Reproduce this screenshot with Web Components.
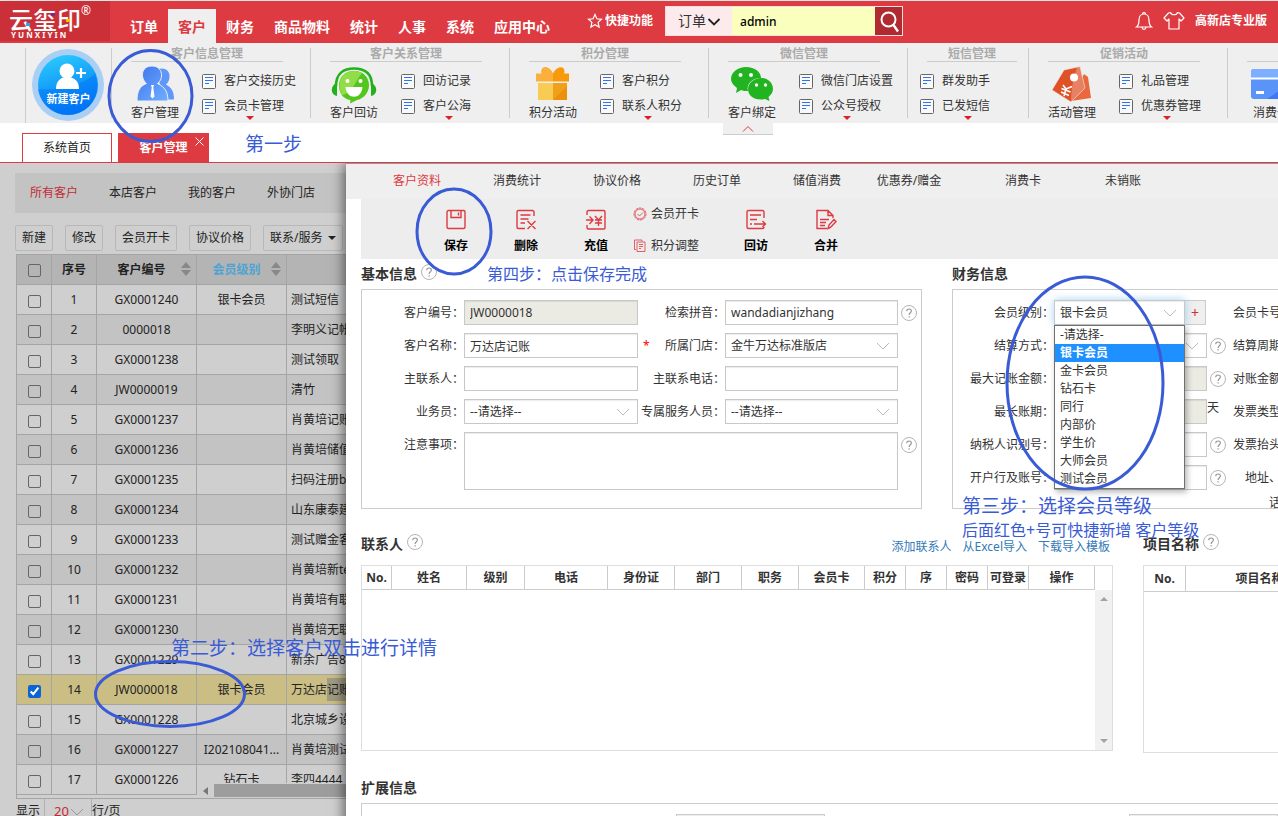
<!DOCTYPE html>
<html lang="zh-CN">
<head>
<meta charset="utf-8">
<title>云玺印 - 客户管理</title>
<style>
html,body{margin:0;height:100%}
body{font:12px/18px "Noto Sans","Noto Sans CJK SC",sans-serif;color:#333;background:#fff;overflow:hidden}
</style>
</head>
<body>
<crm-app></crm-app>
<script>
const BASE = `*{box-sizing:border-box}a{color:inherit;text-decoration:none}ul{list-style:none;margin:0;padding:0}
button,input,select,textarea{font:inherit;color:inherit;margin:0;border-radius:0}h2{margin:0;font-size:14px;line-height:20px}`;

function define(tag, css, html, setup) {
  customElements.define(tag, class extends HTMLElement {
    connectedCallback() {
      if (this.shadowRoot) return;
      const root = this.attachShadow({ mode: 'open' });
      root.innerHTML = `<style>${BASE}${css}</style>` + (typeof html === 'function' ? html(this) : html);
      if (setup) setup(root, this);
    }
  });
}

/* name: [width, height, markup] */
const ICONS = {
  star: [16, 16, '<path d="M8 1.5l1.9 4.3 4.6.5-3.4 3.1 1 4.6L8 11.7 3.9 14l1-4.6L1.5 6.300l4.6-.5z" fill="none" stroke="#fff" stroke-width="1.200"/>'],
  bell: [18, 20, '<path d="M1.500 16c2-1.500 2.500-3.500 2.500-7C4 5.500 6 3 9 3s5 2.500 5 6c0 3.500.5 5.500 2.500 7zM7.500 3a1.500 1.500 0 013 0M7 16.500c.3 2.500 3.700 2.500 4 0" fill="none" stroke="#fff" stroke-width="1.200"/>'],
  shirt: [22, 20, '<path d="M7.500 1.500c1 3 6 3 7 0l2 .5 4.500 5-3 3-2-2v10H6V8l-2 2-3-3 4.500-5z" fill="none" stroke="#fff" stroke-width="1.200" stroke-linejoin="round"/>'],
  search: [22, 24, '<circle cx="8.500" cy="9.500" r="7" fill="none" stroke="#fff" stroke-width="2"/><path d="M13.500 15l4.500 6.500" stroke="#fff" stroke-width="2.400"/>'],
  chevBold: [14, 10, '<path d="M1.500 2L7 7.500 12.500 2" fill="none" stroke="#222" stroke-width="1.800"/>'],
  chev: [14, 10, '<path d="M1 2l6 6 6-6" fill="none" stroke="#bbb"/>'],
  chevDim: [14, 10, '<path d="M1 2l6 6 6-6" fill="none" stroke="#999"/>'],
  up: [12, 8, '<path d="M1 6.500L6 1.500l5 5" fill="none" stroke="#dd3a41"/>'],
  close: [9, 9, '<path d="M.5.5l8 8m0-8l-8 8" stroke="#fff"/>'],
  caret: [8, 5, '<path d="M0 0h8L4 4z" fill="#222"/>'],
  redDown: [8, 4, '<path d="M0 0h8L4 4z" fill="#dc1f28"/>'],
  sort: [10, 14, '<path d="M5 0l5 6H0zM5 14l5-6H0z" fill="#888"/>'],
  help: [16, 16, '<circle cx="8" cy="8" r="7.500" fill="#fff" stroke="#b5b5b5"/><path d="M5.700 6.300c0-3 4.700-3 4.700-.2 0 1.700-2.300 1.700-2.300 3.900" fill="none" stroke="#999" stroke-width="1.200"/><path d="M7.500 11.300h1.300v1.300H7.500z" fill="#999"/>'],
  doc: [14, 16, '<rect x=".5" y="1.500" width="13" height="14" rx="1" fill="#fff" fill-opacity=".6" stroke="#666"/><path d="M3 4.500h8M3 7.500h8M3 10.500h4" stroke="#2b74f5"/>'],
  newuser: [74, 74, '<defs><linearGradient id="n" x1="0" y1="0" x2=".3" y2="1"><stop offset="0" stop-color="#2fd0ff"/><stop offset="1" stop-color="#0078f4"/></linearGradient></defs><circle cx="37" cy="37" r="36" fill="#a9cff5"/><circle cx="37" cy="37" r="30" fill="url(#n)"/><path d="M7 41c22 2 44-4 57-15a30 30 0 01-27 41A30 30 0 017 41z" fill="#0072f8" opacity=".45"/><circle cx="36" cy="23" r="7.500" fill="#fff"/><path d="M25 41c0-8 4-10 8-12h6c5 2 9 4 9 12z" fill="#fff"/><path d="M50 20v10m-5-5h10" stroke="#fff" stroke-width="2.200"/>'],
  users: [44, 38, '<path d="M24 3.500c7-3 13 1 12.500 7 0 4-1.500 6-3.500 8 5 3 8 6 8 15h-7c0-6-1-11-7-14z" fill="#5f97fb"/><defs><linearGradient id="u" x1="0" y1="0" x2="1" y2="1"><stop offset="0" stop-color="#3f74ee"/><stop offset="1" stop-color="#6fb0ff"/></linearGradient></defs><path d="M19 0c11 0 12 13 5.500 17.500C32 21 35 26 35 35H4c0-10 3-15 9.500-17.500C7 12 8 0 19 0z" fill="url(#u)" stroke="#efefef" stroke-width="1"/><path d="M18 19h3l-.7 2.500 1.200 9-2 2-2-2 1.200-9z" fill="#fff"/>'],
  smile: [48, 38, '<path d="M6 20C6 7 14 2.500 24 2.500S42 7 42 20" fill="none" stroke="#23b21c" stroke-width="2.600"/><path d="M7 17v13c-7-1-7-11 0-13zM41 17v13c7-1 7-11 0-13z" fill="#23b21c"/><path d="M24 5c10 0 15 7 15 14.500S33 33 27 34l-7 3.500.5-3.500C13 33 9 27 9 19.500S14 5 24 5z" fill="#52c61d"/><path d="M24 5c3 0 6 .8 8 2C26 14 22 28 12 29 6 18 11 5 24 5z" fill="#90dd48"/><circle cx="17.500" cy="15" r="2" fill="#fff"/><circle cx="30.500" cy="15" r="2" fill="#fff"/><path d="M15.500 21h17c-1 13-16 13-17 0z" fill="#fff"/>'],
  gift: [44, 38, '<path d="M22 8C19-1 8-1 11 8h22c3-9-8-9-11 0z" fill="#f99a0c"/><path d="M22 8C19-1 8-1 11 8z" fill="#fbb03c"/><path d="M5 7.500h17v8H5z" fill="#fbb03c"/><path d="M22 7.500h16v8H22z" fill="#f99a0c"/><path d="M7 17h15v17H7z" fill="#f8cb52"/><path d="M22 17h14v17H22z" fill="#f0a01a"/><path d="M22 34l14-14v14z" fill="#ec9209"/>'],
  wechat: [44, 38, '<path d="M16 1c9 0 15 5 15 11-9 0-15 6-13 13-3 0-5 0-7-1l-5 3 1-5C3 19 1 16 1 13 1 6 8 1 16 1z" fill="#22b321"/><path d="M31 12c7 0 12 5 12 11 0 3-2 6-4.500 8l1 4-4.500-2c-10 2-17-3-17-10 0-6 6-11 13-11z" fill="#22b321"/><g fill="#fff"><circle cx="10.500" cy="9" r="2"/><circle cx="21" cy="9" r="2"/><circle cx="26.500" cy="19" r="1.700"/><circle cx="35.500" cy="19" r="1.700"/></g>'],
  tags: [44, 38, '<path d="M34 8l4 3 3 21-20 3z" fill="#e9683e"/><path d="M14 4l16-3.500 5 21.500-14 14L2 24z" fill="#df5127" stroke="#efefef" stroke-width=".6"/><path d="M27 1.500l3-1 5 21.500-14 14c0-12 2-23 6-34.500z" fill="#fff" opacity=".28"/><circle cx="24" cy="11.500" r="4" fill="#fff"/><path d="M13 19l3 4 6-2.500M16 23l-2 7M11.500 22.500l9 3.500M11 26l8 3.500" fill="none" stroke="#fff" stroke-width="1.500"/>'],
  card: [44, 38, '<rect x="2" y="3" width="44" height="30" rx="3" fill="#5a94f8"/><path d="M5 3h39v9H2V6a3 3 0 013-3z" fill="#7eaeff"/><path d="M46 14L18 33h26z" fill="#3f78f5"/><path d="M2 11.500h44v2H2zM7 25h8v3H7z" fill="#fff"/>'],
  save: [22, 22, '<rect x="2" y="1.500" width="18" height="18" rx="1.500"/><path d="M6 1.500v7h10v-7M13.500 3.500v3"/>'],
  del: [22, 22, '<path d="M19 7V3a1.500 1.500 0 00-1.500-1.500h-14A1.500 1.500 0 002 3v15a1.500 1.500 0 001.500 1.500H10M5.500 6h10M5.500 10h8M5.500 14H10M12.500 12l8 8m0-8l-8 8"/>'],
  charge: [22, 22, '<path d="M2 6V3a1.500 1.500 0 011.500-1.500h15A1.500 1.500 0 0120 3v16a1 1 0 01-1 1H3.500A1.500 1.500 0 012 18.500V16M1 11h6M4.500 7.500L8 11l-3.500 4M10 7l3.500 4L17 7M10 11h7M10 14h7M13.500 11v6"/>'],
  visit: [22, 22, '<path d="M19 9V3a1.500 1.500 0 00-1.500-1.500h-14A1.500 1.500 0 002 3v15a1.500 1.500 0 001.500 1.500h14a1.500 1.500 0 001.500-1.500M5 6h11M5 10.500h7M5 15h2M9 15h11.500M17.500 12l3 3-3 3"/>'],
  merge: [22, 22, '<path d="M18 9V6.500L13 1.500H2v18h10M13 1.500v5h5M5 10.500h9M5 13.500h6M5 16.500h5M13 19.500l1-3.500 5-5.500 2 2-5.500 6z"/>'],
  badge: [14, 14, '<circle cx="7" cy="7" r="6" stroke-dasharray="2.500 .8"/><circle cx="7" cy="7" r="5"/><path d="M4.500 7l2 2 3.500-3.500"/>'],
  sheets: [14, 14, '<path d="M4 3h8v9.500H4zM3 10.500H1.500V1H9v1.500M6 5.500h4M6 7.500h4M6 9.500h2"/>'],
  arrL: [5, 8, '<path d="M5 0v8L0 4z" fill="#777"/>'],
  arrU: [8, 4, '<path d="M4 0l4 4H0z" fill="#a3a3a3"/>'],
  arrD: [8, 4, '<path d="M0 0h8L4 4z" fill="#a3a3a3"/>']
};
const RED_LINE = ['save', 'del', 'charge', 'visit', 'merge', 'badge', 'sheets'];
define('app-icon', ':host{display:inline-block;flex:none;line-height:0}svg{display:block}', el => {
  const n = el.getAttribute('name'), [w, h, m] = ICONS[n];
  const g = RED_LINE.includes(n) ? `<g fill="none" stroke="#dd3a41" stroke-width="${w > 14 ? 1.4 : 0.8}">${m}</g>` : m;
  return `<svg width="${w}" height="${h}" viewBox="0 0 ${w} ${h}" aria-hidden="true">${g}</svg>`;
});
const icon = n => `<app-icon name="${n}"></app-icon>`;

define('brand-logo', `:host{display:block;position:relative;width:110px;height:40px;padding:6px 0 0 9px;background:#cb3038;color:#fff}
.n{font:500 24px/24px "Noto Sans CJK SC",sans-serif;display:flex}.n sup{font:12px/12px "Noto Sans",sans-serif;margin-top:-2px}
.e{font-size:8px;line-height:8px;padding-left:2px;white-space:nowrap}
i{position:absolute;width:4px;height:3px}`,
`<div class="n">云玺印<sup>®</sup></div><div class="e">Y U N X I Y I N</div>
<i style="left:26px;top:22px;background:#2aa4e8"></i><i style="left:51px;top:12px;background:#7a2a8c"></i><i style="left:66px;top:18px;background:#f5c400"></i>`);

define('app-header', `:host{display:flex;align-items:flex-start;height:43px;border-top:1px solid #e4e4e4;background:#dd3a41;color:#fff;font-weight:700}
nav{display:flex;align-items:flex-end;height:42px;margin-left:10px;font-size:14px;line-height:36px}
nav a{padding:0 10px;height:34px;white-space:nowrap}nav a.on{background:#efefef;color:#dd3a41}
.tools{display:flex;align-items:center;height:40px;flex:1}
.fav{display:flex;align-items:center;gap:2px;margin-left:27px;white-space:nowrap}
form{display:flex;margin-left:12px;height:30px;border:1px solid #f3dfe0;font-weight:400}
.pick{position:relative;display:flex;align-items:center;background:#fdeaec;color:#333}
.pick select{appearance:none;border:0;background:none;width:66px;height:28px;padding:0 0 0 12px;font-size:14px}
.pick app-icon{position:absolute;right:11px;top:10px;pointer-events:none}
input{border:0;width:143px;height:28px;background:#faffbd;color:#000;padding:0 8px;font-weight:500}
form button{border:0;background:#b02a32;width:27px;padding:3px 0 0 4px}
.right{display:flex;align-items:center;gap:10px;margin:0 11px 0 auto;white-space:nowrap}
.right button{border:0;background:none;padding:0;display:flex}`,
`<brand-logo></brand-logo>
<nav>${['订单','客户','财务','商品物料','统计','人事','系统','应用中心'].map(t => `<a href="#"${t === '客户' ? ' class="on"' : ''}>${t}</a>`).join('')}</nav>
<div class="tools"><a class="fav" href="#">${icon('star')}快捷功能</a>
<form><span class="pick"><select aria-label="搜索类型"><option>订单</option></select>${icon('chevBold')}</span><input aria-label="搜索" value="admin"><button type="button" aria-label="搜索">${icon('search')}</button></form>
<div class="right"><button aria-label="消息">${icon('bell')}</button><button aria-label="皮肤">${icon('shirt')}</button><span>高新店专业版</span></div></div>`);

define('ribbon-group', `:host{display:block;flex:none;width:199px;height:70px;margin-top:5px;border-left:1px solid #ccc}
:host([compact]){width:121px}
.t{margin-left:19px;width:152px;height:14px;line-height:11px;border-bottom:1px solid #ccc;text-align:center;color:#aaa;font-weight:700}
:host([compact]) .t{width:90px}
.b{display:flex;margin:4px 0 0 19px}:host([compact]) .b{margin-left:12px}
.big{display:flex;flex-direction:column;align-items:center;width:48px;margin-right:23px;height:56px;white-space:nowrap}
.big span{line-height:18px}
ul{position:relative;margin-top:2px}li{height:25px}li a{display:flex;align-items:center;gap:8px;height:25px;white-space:nowrap}
ul>app-icon{position:absolute;left:44px;top:48px}`,
el => {
  const a = n => el.getAttribute(n), items = (a('items') || '').split(',').filter(Boolean);
  return `<div class="t">${a('label') || ''}</div><div class="b">${a('big') ? `<a class="big" href="#">${icon(a('icon'))}<span>${a('big')}</span></a>` : ''}
  ${items.length ? `<ul>${items.map(t => `<li><a href="#">${icon('doc')}${t}</a></li>`).join('')}${icon('redDown')}</ul>` : ''}</div>`;
});

define('ribbon-bar', `:host{display:flex;position:relative;height:80px;background:#efefef;z-index:1}
.new{position:relative;flex:none;width:86px;margin:5px 0 0 25px;border-left:1px solid #ccc;padding-left:5px}
.new a{display:block}.new span{position:absolute;left:0;right:0;top:42px;text-align:center;color:#fff;font-weight:700;font-size:11px}
.fold{position:absolute;left:723px;top:80px;width:50px;height:12px;border:0;border-bottom:1px solid #ccc;background:#efefef;display:flex;justify-content:center;padding:2px 0 0}`,
`<div class="new"><a href="#">${icon('newuser')}<span>新建客户</span></a></div>
<ribbon-group label="客户信息管理" icon="users" big="客户管理" items="客户交接历史,会员卡管理"></ribbon-group>
<ribbon-group label="客户关系管理" icon="smile" big="客户回访" items="回访记录,客户公海"></ribbon-group>
<ribbon-group label="积分管理" icon="gift" big="积分活动" items="客户积分,联系人积分"></ribbon-group>
<ribbon-group label="微信管理" icon="wechat" big="客户绑定" items="微信门店设置,公众号授权"></ribbon-group>
<ribbon-group compact label="短信管理" items="群发助手,已发短信"></ribbon-group>
<ribbon-group label="促销活动" icon="tags" big="活动管理" items="礼品管理,优惠券管理"></ribbon-group>
<ribbon-group icon="card" big="消费卡"></ribbon-group>
<button class="fold" aria-label="收起">${icon('up')}</button>`);

define('page-tabs', `:host{display:flex;align-items:flex-end;gap:6px;height:40px;padding-left:22px;border-bottom:1px solid #dd3a41;background:#fff}
a{position:relative;width:90px;height:29px;line-height:28px;text-align:center;border:1px solid #dd3a41;border-bottom:0;color:#222}
a.on{width:91px;background:#dd3a41;color:#fff;font-weight:700}a app-icon{position:absolute;right:4px;top:3px}`,
`<a href="#">系统首页</a><a class="on" href="#">客户管理${icon('close')}</a>`);

const ROWS = [['GX0001240','银卡会员','测试短信'],['0000018','','李明义记帐'],['GX0001238','','测试领取'],['JW0000019','','清竹'],['GX0001237','','肖黄培记账'],['GX0001236','','肖黄培储值'],['GX0001235','','扫码注册b'],['GX0001234','','山东康泰建'],['GX0001233','','测试赠金客'],['GX0001232','','肖黄培新te'],['GX0001231','','肖黄培有联'],['GX0001230','','肖黄培无联'],['GX0001229','','新余广告8'],['JW0000018','银卡会员','万达店<mark>记账</mark>'],['GX0001228','','北京城乡设'],['GX0001227','I202108041...','肖黄培测试'],['GX0001226','钻石卡','李四4444']];
define('customer-list', `:host{display:block;flex:none;width:346px;overflow:hidden;background:#cfcfcf;color:#222;padding:10px 0 0 15px}
nav{display:flex;gap:31px;height:40px;line-height:40px;padding-left:15px;background:#c3c3c3;white-space:nowrap}nav .on{color:#c22b33}
.acts{display:flex;gap:12px;margin-top:12px}.acts button{flex:none;height:26px;padding:0 6px;border:1px solid #b8b8b8;border-radius:2px;background:none;white-space:nowrap;display:flex;align-items:center;gap:5px}
.wrap{position:relative;margin:3px 0 0 1px;border:1px solid #a5a5a5;border-right:0;height:545px;overflow:hidden}
table{border-spacing:0;table-layout:fixed;width:470px}
th,td{position:relative;height:30px;padding:0;border-right:1px solid #a5a5a5;border-bottom:1px solid #a5a5a5;text-align:center;white-space:nowrap;overflow:hidden}
th{background:#b4b4b4}th.s{padding-right:10px}th.s app-icon{position:absolute;right:5px;top:7px}th.blue{color:#4da3d3}
td:last-child{text-align:left;padding-left:4px}tr:nth-child(even) td{background:#c3c3c3}tr.sel td{background:#cbbe84}
mark{background:#a09b83;color:inherit;padding:3px 0}
input{display:block;margin:2px auto 0;appearance:none;width:13px;height:13px;border:1px solid #666;border-radius:2px}td input{margin-top:4px}
input:checked{appearance:auto;accent-color:#0b63d6}
.sb{position:absolute;left:180px;right:0;bottom:0;height:15px;background:#cfcfcf;display:flex;align-items:center;gap:6px;padding-left:6px}.sb i{flex:1;height:13px;background:#9d9d9d}
footer{display:flex;line-height:24px;height:24px;padding-left:1px}
.pg{position:relative;margin-left:4px;width:48px;border:1px solid #b0b0b0;border-top:0}.pg select{appearance:none;border:0;background:none;color:#c22b33;padding:0 0 0 9px;width:46px;height:23px;font-size:13px}.pg app-icon{position:absolute;right:7px;top:8px;pointer-events:none}`,
`<nav><a class="on" href="#">所有客户</a><a href="#">本店客户</a><a href="#">我的客户</a><a href="#">外协门店</a></nav>
<div class="acts"><button>新建</button><button>修改</button><button>会员开卡</button><button>协议价格</button><button>联系/服务${icon('caret')}</button></div>
<div class="wrap"><table><colgroup><col style="width:35px"><col style="width:45px"><col style="width:100px"><col style="width:90px"><col></colgroup>
<thead><tr><th><input type="checkbox" aria-label="全选"></th><th>序号</th><th class="s">客户编号${icon('sort')}</th><th class="s blue">会员级别${icon('sort')}</th><th></th></tr></thead>
<tbody>${ROWS.map((r, i) => `<tr${i === 13 ? ' class="sel"' : ''}><td><input type="checkbox" aria-label="选择第${i + 1}行"${i === 13 ? ' checked' : ''}></td><td>${i + 1}</td><td>${r[0]}</td><td>${r[1]}</td><td>${r[2]}</td></tr>`).join('')}</tbody></table>
<div class="sb">${icon('arrL')}<i></i></div></div>
<footer><label for="pg">显示</label><span class="pg"><select id="pg"><option>20</option></select>${icon('chevDim')}</span><span>行/页</span></footer>`);

define('drawer-tabs', `:host{display:flex;height:36px;line-height:34px;padding-left:21px;background:#efefef;border-top:1px solid #999}
a{flex:none;width:100px;text-align:center;white-space:nowrap}a:nth-of-type(6){width:84px}a:nth-of-type(7){width:144px}a:nth-of-type(8){width:56px}.on{color:#dd3a41}`,
['客户资料','消费统计','协议价格','历史订单','储值消费','优惠券/赠金','消费卡','未销账'].map((t, i) => `<a href="#"${i ? '' : ' class="on"'}>${t}</a>`).join(''));

const tool = (n, t) => `<button>${icon(n)}${t}</button>`;
define('drawer-tools', `:host{display:flex;height:60px;margin-left:15px;padding-left:60px;background:#ededed}
button{border:0;background:none;padding:0;white-space:nowrap}
:host>*{flex:none}:host>button{width:70px;display:flex;flex-direction:column;align-items:center;gap:6px;padding-top:10px;font-weight:700;color:#000}
.two{width:90px;padding:1px 0 0 2px;display:flex;flex-direction:column;gap:8px}.two button{display:flex;align-items:center;gap:4px;height:24px;padding-top:4px}`,
tool('save','保存') + tool('del','删除') + tool('charge','充值') + `<div class="two">${tool('badge','会员开卡')}${tool('sheets','积分调整')}</div>` + tool('visit','回访') + tool('merge','合并'));

define('panel-head', `:host{display:flex;align-items:center;gap:4px;height:30px}h2{white-space:nowrap;color:#333}button{border:0;background:none;padding:0 0 4px;display:flex}`,
el => `<h2><slot></slot></h2>${el.hasAttribute('help') ? `<button aria-label="帮助">${icon('help')}</button>` : ''}`);

const FORM = `label{text-align:right;white-space:nowrap;line-height:25px}
input,select,textarea{display:block;width:100%;height:25px;border:1px solid #c8c8c8;background:#fff;padding:0 5px;outline:0;resize:none;appearance:none;box-shadow:inset 0 1px 1px rgba(0,0,0,.08)}
input:disabled{background:#ebebe4}
.sel{position:relative}.sel>app-icon{position:absolute;right:8px;top:8px;pointer-events:none}
.h{border:0;background:none;padding:5px 0 0 3px;height:25px;display:flex}`;
const help = `<button class="h" aria-label="帮助">${icon('help')}</button>`;
const sel = (id, v) => `<div class="sel"><select id="${id}"><option>${v}</option></select>${icon('chev')}</div>`;

define('basic-form', FORM + `:host{display:grid;grid-template-columns:102px 174px 87px 173px 1fr;grid-auto-rows:25px;gap:8px 0;border:1px solid #ccc;height:220px;padding-top:10px}
.req{display:flex;justify-content:space-between;padding-left:5px}.req b{color:#f00;font-weight:400}
textarea{height:58px;grid-column:2/5}`,
`<label for="no">客户编号：</label><input id="no" disabled value="JW0000018"><label for="py">检索拼音：</label><input id="py" value="wandadianjizhang">${help}
<label for="nm">客户名称：</label><input id="nm" value="万达店记账"><label class="req" for="sh"><b>*</b>所属门店：</label>${sel('sh','金牛万达标准版店')}<i></i>
<label for="ct">主联系人：</label><input id="ct"><label for="tel">主联系电话：</label><input id="tel"><i></i>
<label for="sa">业务员：</label>${sel('sa','--请选择--')}<label for="sv">专属服务人员：</label>${sel('sv','--请选择--')}<i></i>
<label for="nt">注意事项：</label><textarea id="nt"></textarea>${help}`);

define('level-select', FORM + `:host{display:flex;position:relative;z-index:2}
.sel{width:131px;box-shadow:0 0 8px rgba(102,175,233,.6)}
.add{width:21px;height:25px;border:1px solid #ccc;border-left:0;background:#efefef;color:#dd2a31;padding:0;font-size:14px}
ul{position:absolute;left:0;top:25px;width:131px;border:1px solid #707070;background:#fff;box-shadow:2px 3px 6px rgba(0,0,0,.3)}
li{height:18px;line-height:18px;padding-left:5px;white-space:nowrap}li[aria-selected]{background:#1e90ff;color:#fff;font-weight:700}`,
`<div class="sel"><select id="lv" aria-label="会员级别"><option>银卡会员</option></select>${icon('chev')}</div><button class="add" aria-label="新增会员级别">+</button>
<ul role="listbox">${['-请选择-','银卡会员','金卡会员','钻石卡','同行','内部价','学生价','大师会员','测试会员'].map((t, i) => `<li role="option"${i === 1 ? ' aria-selected="true"' : ''}>${t}</li>`).join('')}</ul>`);

define('finance-form', FORM + `:host{display:grid;grid-template-columns:101px 153px 26px 60px 1fr;grid-auto-rows:25px;gap:8px 0;border:1px solid #ccc;border-right:0;height:220px;padding-top:10px}`,
`<label>会员级别：</label><level-select></level-select><i></i><label for="f1">会员卡号：</label><input id="f1">
<label for="f2">结算方式：</label>${sel('f2','')}${help}<label for="f3">结算周期：</label><input id="f3">
<label for="f4">最大记账金额：</label><input id="f4" disabled>${help}<label for="f5">对账金额：</label><input id="f5">
<label for="f6">最长账期：</label><input id="f6" disabled><span>天</span><label for="f7">发票类型：</label><input id="f7">
<label for="f8">纳税人识别号：</label><input id="f8">${help}<label for="f9">发票抬头：</label><input id="f9">
<label for="g1">开户行及账号：</label><input id="g1">${help}<label for="g2">地址、电<br>话：</label><input id="g2">`);

const COLS = [['No.',30],['姓名',75],['级别',58],['电话',83],['身份证',67],['部门',67],['职务',57],['会员卡',66],['积分',41],['序',41],['密码',41],['可登录',41],['操作',66]];
const GRID = `.box{border:1px solid #ddd;position:relative}table{border-spacing:0;table-layout:fixed}
th{height:24px;padding:0;border-right:1px solid #ccc;border-bottom:1px solid #ccc;white-space:nowrap;color:#333;text-align:center}`;
define('contact-grid', GRID + `:host{display:block}.box{height:186px}table{width:733px}
.sb{position:absolute;right:0;top:24px;bottom:0;width:17px;background:#f1f1f1;display:flex;flex-direction:column;justify-content:space-between;align-items:center;padding:7px 0}`,
`<div class="box"><table><thead><tr>${COLS.map(c => `<th style="width:${c[1]}px">${c[0]}</th>`).join('')}</tr></thead></table><div class="sb">${icon('arrU')}${icon('arrD')}</div></div>`);
define('project-grid', GRID + `:host{display:block}.box{height:188px;border-right:0}table{width:190px}th{height:26px}`,
`<div class="box"><table><thead><tr><th style="width:42px">No.</th><th style="width:148px">项目名称</th></tr></thead></table></div>`);

define('customer-drawer', `:host{display:block;position:relative;flex:1;min-width:0;background:#fff;box-shadow:-2px 0 12px rgba(0,0,0,.55);clip-path:inset(0 0 0 -20px)}
.row{display:grid;gap:30px;margin-left:15px}.r1{grid-template-columns:561px minmax(380px,1fr)}.r2{grid-template-columns:752px minmax(190px,1fr)}
.cap{height:56px;padding-top:20px;display:flex;align-items:flex-start;justify-content:space-between}
.links{display:flex;gap:11px;padding:9px 3px 0 0;color:#337ab7;white-space:nowrap}
.ext{margin-left:15px;padding-top:20px}.ext div{display:flex;justify-content:space-between;height:80px;border:1px solid #ccc;border-right:0;padding:10px 0 0 314px}
.ext input{width:149px;height:25px;border:1px solid #ccc;background:#eee}`,
`<drawer-tabs></drawer-tabs><drawer-tools></drawer-tools>
<div class="row r1"><section><panel-head help>基本信息</panel-head><basic-form></basic-form></section><section><panel-head>财务信息</panel-head><finance-form></finance-form></section></div>
<div class="row r2"><section><div class="cap"><panel-head help>联系人</panel-head><div class="links"><a href="#">添加联系人</a><a href="#">从Excel导入</a><a href="#">下载导入模板</a></div></div><contact-grid></contact-grid></section>
<section><div class="cap"><panel-head help>项目名称</panel-head></div><project-grid></project-grid></section></div>
<section class="ext"><panel-head>扩展信息</panel-head><div><input aria-label="扩展信息一" disabled><input aria-label="扩展信息二" disabled></div></section>`);

define('guide-notes', `:host{position:absolute;left:0;top:0;width:100%;height:100%;pointer-events:none;z-index:5;overflow:hidden;color:#3a5bd6}
svg{position:absolute;left:0;top:0}p{position:absolute;margin:0;white-space:nowrap;font-size:19px;line-height:28px}p.s{font-size:16px;line-height:24px}`,
`<svg width="1278" height="816" fill="none" stroke="#3a5bd6" stroke-width="3"><ellipse cx="150.500" cy="96" rx="41.500" ry="45.500"/><ellipse cx="454" cy="231.500" rx="37" ry="42.500"/><ellipse cx="1085" cy="383" rx="78" ry="106"/><ellipse cx="170" cy="694" rx="74.500" ry="32.500"/></svg>
<p style="left:245px;top:130px">第一步</p><p style="left:171px;top:634px">第二步：选择客户双击进行详情</p>
<p style="left:962px;top:492px">第三步：选择会员等级</p><p class="s" style="left:962px;top:518px">后面红色+号可快捷新增 客户等级</p>
<p class="s" style="left:487px;top:262px">第四步：点击保存完成</p>`);

define('crm-app', `:host{display:flex;flex-direction:column;position:relative;height:100vh;overflow:hidden}
:host>*{flex:none}main{display:flex;flex:1;min-height:0}`,
`<app-header></app-header><ribbon-bar></ribbon-bar><page-tabs></page-tabs><main><customer-list></customer-list><customer-drawer></customer-drawer></main><guide-notes></guide-notes>`);
</script>
</body>
</html>
